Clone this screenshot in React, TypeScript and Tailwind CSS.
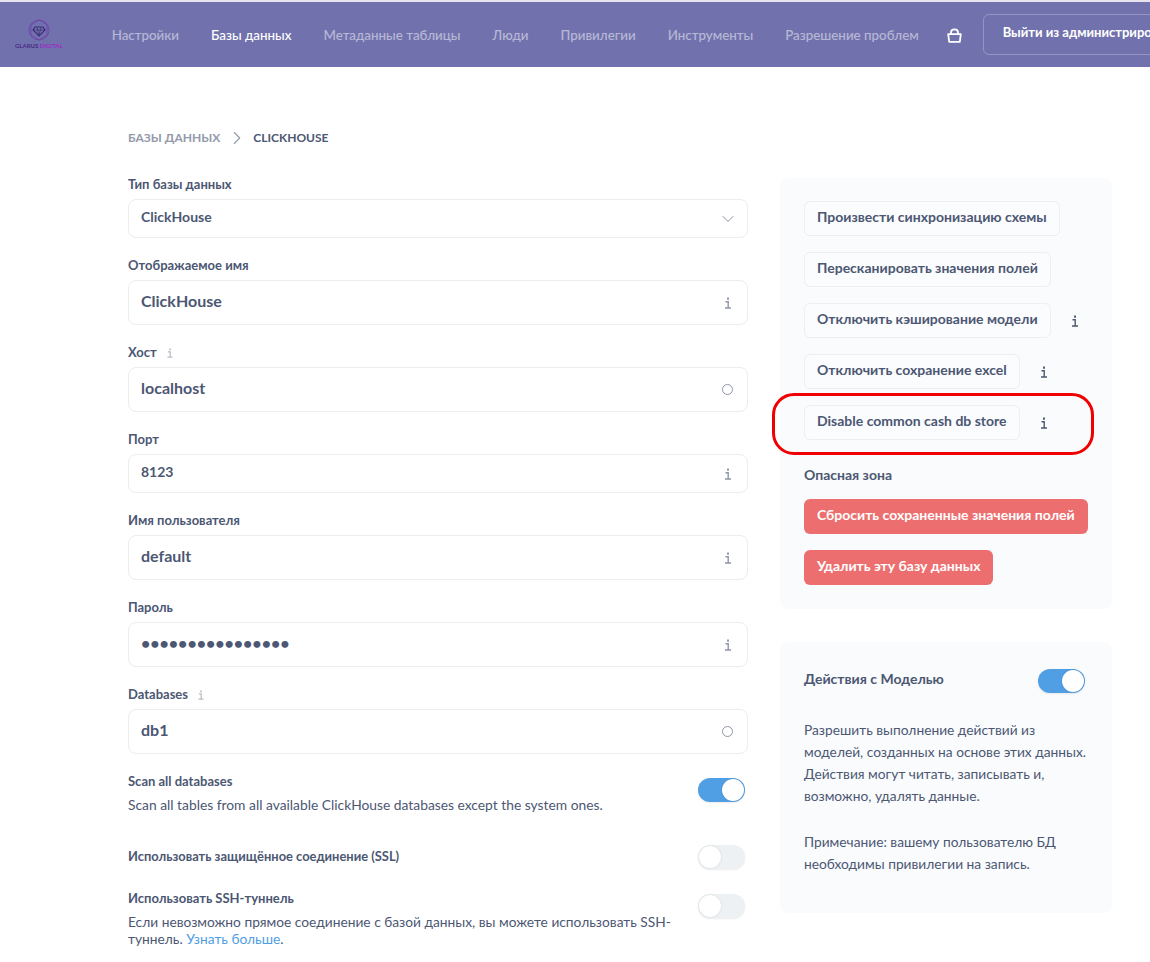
import { ChevronDown, ChevronRight } from 'lucide-react';

const navItems = ['Настройки', 'Базы данных', 'Метаданные таблицы', 'Люди', 'Привилегии', 'Инструменты', 'Разрешение проблем'];

function Logo() {
  return (
    <div className="flex w-[50px] flex-col items-center">
      <svg width="22" height="22" viewBox="0 0 22 22" fill="none" stroke="#6f3fa6" strokeWidth="0.8">
        <circle cx="11" cy="11" r="10" />
        <path d="M11 1 L19 6 L19 16 L11 21 L3 16 L3 6 Z" />
        <path d="M7 8 L15 8 L17 11 L11 17 L5 11 Z" stroke="#3f2a78" strokeWidth="1.2" />
        <path d="M5 11 L17 11 M9 8 L11 17 L13 8" stroke="#3f2a78" strokeWidth="0.7" />
      </svg>
      <div className="mt-[1px] whitespace-nowrap text-[6px] font-bold leading-[8px]">
        <span className="text-[#4a2a86]">GLARUS </span>
        <span className="text-[#9a2cc4]">DIGITAL</span>
      </div>
    </div>
  );
}

function Info({ className = '' }: { className?: string }) {
  return (
    <svg className={className} width="8" height="12" viewBox="0 0 8 12" fill="none" stroke="currentColor">
      <path d="M4 0.5 V2.7" strokeWidth="1.9" />
      <path d="M1.5 4.7 H4.2 V10.8 M1 11 H7" strokeWidth="1.4" />
    </svg>
  );
}

function Field({
  label,
  value,
  height = 'h-[45px]',
  size = 'text-[16px]',
  icon = 'info',
  labelInfo,
  password,
}: {
  label: string;
  value: string;
  height?: string;
  size?: string;
  icon?: 'info' | 'circle';
  labelInfo?: boolean;
  password?: boolean;
}) {
  return (
    <div>
      <div className="mb-1 flex h-5 items-center text-[13px] font-bold text-[#4c5773]">
        {label}
        {labelInfo && <Info className="ml-[9px] h-[10px] text-[#b8bbc3]" />}
      </div>
      <div className={`flex items-center justify-between rounded-lg border border-[#eeecec] bg-white pl-3 pr-[15px] ${height}`}>
        <span className={`mb-1 font-bold text-[#4c5773] ${size} ${password ? 'tracking-[0.5px]' : ''}`}>{value}</span>
        {icon === 'info' ? (
          <Info className="text-[#8f95a6]" />
        ) : (
          <span className="mr-[-1px] h-[11px] w-[11px] rounded-full border-[1.5px] border-[#8f95a6]" />
        )}
      </div>
    </div>
  );
}

function Toggle({ on, className = '' }: { on?: boolean; className?: string }) {
  return (
    <div
      className={`flex h-6 w-[47px] shrink-0 items-center rounded-full shadow-[0_1px_2px_rgba(0,0,0,0.08)] ${className} ${
        on ? 'justify-end bg-[#509ee3] pr-[1px]' : 'justify-start bg-[#edf1f3] pl-[1px]'
      }`}
    >
      <span className="h-[22px] w-[22px] rounded-full bg-white shadow-[0_0_2px_rgba(0,0,0,0.15)]" />
    </div>
  );
}

function ActionButton({ children, info }: { children: string; info?: boolean }) {
  return (
    <div className="flex items-center">
      <div className="flex h-[35px] items-center whitespace-nowrap rounded-md border border-[#f0eeee] bg-[#fbfcfd] px-3 pb-1 text-[14px] font-bold text-[#4c5773]">
        {children}
      </div>
      {info && <Info className="ml-[20px] mt-[1px] text-[#4c5773]" />}
    </div>
  );
}

function DangerButton({ children }: { children: string }) {
  return (
    <div className="flex h-[35px] w-fit items-center whitespace-nowrap rounded-md bg-[#ed6e6e] px-[13px] pb-1 text-[14px] font-bold text-white">
      {children}
    </div>
  );
}

export default function App() {
  return (
    <div className="h-[962px] w-[1150px] overflow-hidden bg-white font-['Lato',sans-serif]">
      <div className="h-[2px] bg-[#e6e2f0]" />
      <header className="flex h-[65px] items-center overflow-hidden bg-[#7172ad] pl-[15px]">
        <Logo />
        <nav className="ml-[49px] flex shrink-0 gap-8 pt-[1px] text-[13.35px] font-medium">
          {navItems.map((item) => (
            <span key={item} className={`whitespace-nowrap ${item === 'Базы данных' ? 'text-white' : 'text-white/50'}`}>
              {item}
            </span>
          ))}
        </nav>
        <svg className="ml-[28px] mt-[2px] shrink-0" width="15" height="15" viewBox="0 0 15 15" fill="none" stroke="white" strokeWidth="1.8">
          <path d="M1.2 6.2 H13.8 L12.8 13.8 H2.2 Z" strokeLinejoin="round" />
          <path d="M4 6 V4.5 C4 0.3 11 0.3 11 4.5 V6" />
        </svg>
        <div className="ml-[21px] flex h-[41px] shrink-0 items-center rounded-md border border-white/25 px-[19px] pb-[3px] text-[13px] font-bold whitespace-nowrap text-white">
          Выйти из администрирования
        </div>
      </header>

      <main className="flex pl-[128px] pt-[63px]">
        <div className="w-[620px]">
          <div className="flex h-4 items-center text-[12px] font-bold uppercase">
            <span className="text-[#949aab]">Базы данных</span>
            <ChevronRight size={22} strokeWidth={1.2} className="ml-[6px] mr-[5px] text-[#949aab]" />
            <span className="text-[#4c5773]">ClickHouse</span>
          </div>

          <div className="mt-[29px] flex flex-col gap-[18px]">
            <div>
              <div className="mb-1 flex h-5 items-center text-[13px] font-bold text-[#4c5773]">Тип базы данных</div>
              <div className="flex h-[39px] items-center justify-between rounded-lg border border-[#eeecec] pl-3 pr-[9px] text-[14px] font-bold text-[#4c5773]">
                <span className="mb-1">ClickHouse</span>
                <ChevronDown size={20} strokeWidth={1.2} className="text-[#8a90a0]" />
              </div>
            </div>
            <Field label="Отображаемое имя" value="ClickHouse" />
            <Field label="Хост" value="localhost" icon="circle" labelInfo />
            <Field label="Порт" value="8123" height="h-[39px]" size="text-[14px]" />
            <Field label="Имя пользователя" value="default" />
            <Field label="Пароль" value="••••••••••••••••" />
            <Field label="Databases" value="db1" icon="circle" labelInfo />
          </div>

          <div className="mt-4 flex justify-between pr-[3px]">
            <div>
              <div className="text-[13px] font-bold leading-[22px] text-[#4c5773]">Scan all databases</div>
              <div className="mt-[2px] text-[13.82px] leading-[22px] text-[#4c5773]">
                Scan all tables from all available ClickHouse databases except the system ones.
              </div>
            </div>
            <Toggle on className="mt-2" />
          </div>

          <div className="mt-[29px] flex items-center justify-between pr-[3px]">
            <div className="text-[12.9px] font-bold text-[#4c5773]">Использовать защищённое соединение (SSL)</div>
            <Toggle />
          </div>

          <div className="mt-[25px] flex justify-between pr-[3px]">
            <div className="w-[550px]">
              <div className="text-[13px] font-bold leading-[8px] text-[#4c5773]">Использовать SSH-туннель</div>
              <div className="mt-[11px] text-[13.75px] leading-[17px] text-[#4c5773]">
                Если невозможно прямое соединение с базой данных, вы можете использовать SSH-туннель.{' '}
                <span className="text-[#509ee3]">Узнать больше</span>.
              </div>
            </div>
            <Toggle />
          </div>
        </div>

        <aside className="ml-8 w-[332px] pt-[48px]">
          <div className="h-[431px] rounded-lg bg-[#f9fbfc] px-6 pt-[23px]">
            <div className="flex flex-col gap-4">
              <ActionButton>Произвести синхронизацию схемы</ActionButton>
              <ActionButton>Пересканировать значения полей</ActionButton>
              <ActionButton info>Отключить кэширование модели</ActionButton>
              <ActionButton info>Отключить сохранение excel</ActionButton>
              <div className="relative">
                <ActionButton info>Disable common cash db store</ActionButton>
                <div className="pointer-events-none absolute left-[-32px] top-[-12px] h-[62px] w-[322px] rounded-[22px] border-[3px] border-[#f00000]" />
              </div>
            </div>
            <div className="mt-[25px] text-[14px] font-bold leading-[20px] text-[#4c5773]">Опасная зона</div>
            <div className="mt-[14px] flex flex-col gap-4">
              <DangerButton>Сбросить сохраненные значения полей</DangerButton>
              <DangerButton>Удалить эту базу данных</DangerButton>
            </div>
          </div>

          <div className="mt-[33px] h-[271px] rounded-lg bg-[#f9fbfc] px-6 pt-[26px]">
            <div className="flex items-center justify-between pr-[3px]">
              <span className="mb-1 text-[14px] font-bold text-[#4c5773]">Действия с Моделью</span>
              <Toggle on />
            </div>
            <p className="mt-[26px] text-[13.75px] leading-[22px] text-[#4c5773]">
              Разрешить выполнение действий из моделей, созданных на основе этих данных. Действия могут читать, записывать и, возможно, удалять данные.
            </p>
            <p className="mt-[24px] text-[13.75px] leading-[22px] text-[#4c5773]">
              Примечание: вашему пользователю БД необходимы привилегии на запись.
            </p>
          </div>
        </aside>
      </main>
    </div>
  );
}
